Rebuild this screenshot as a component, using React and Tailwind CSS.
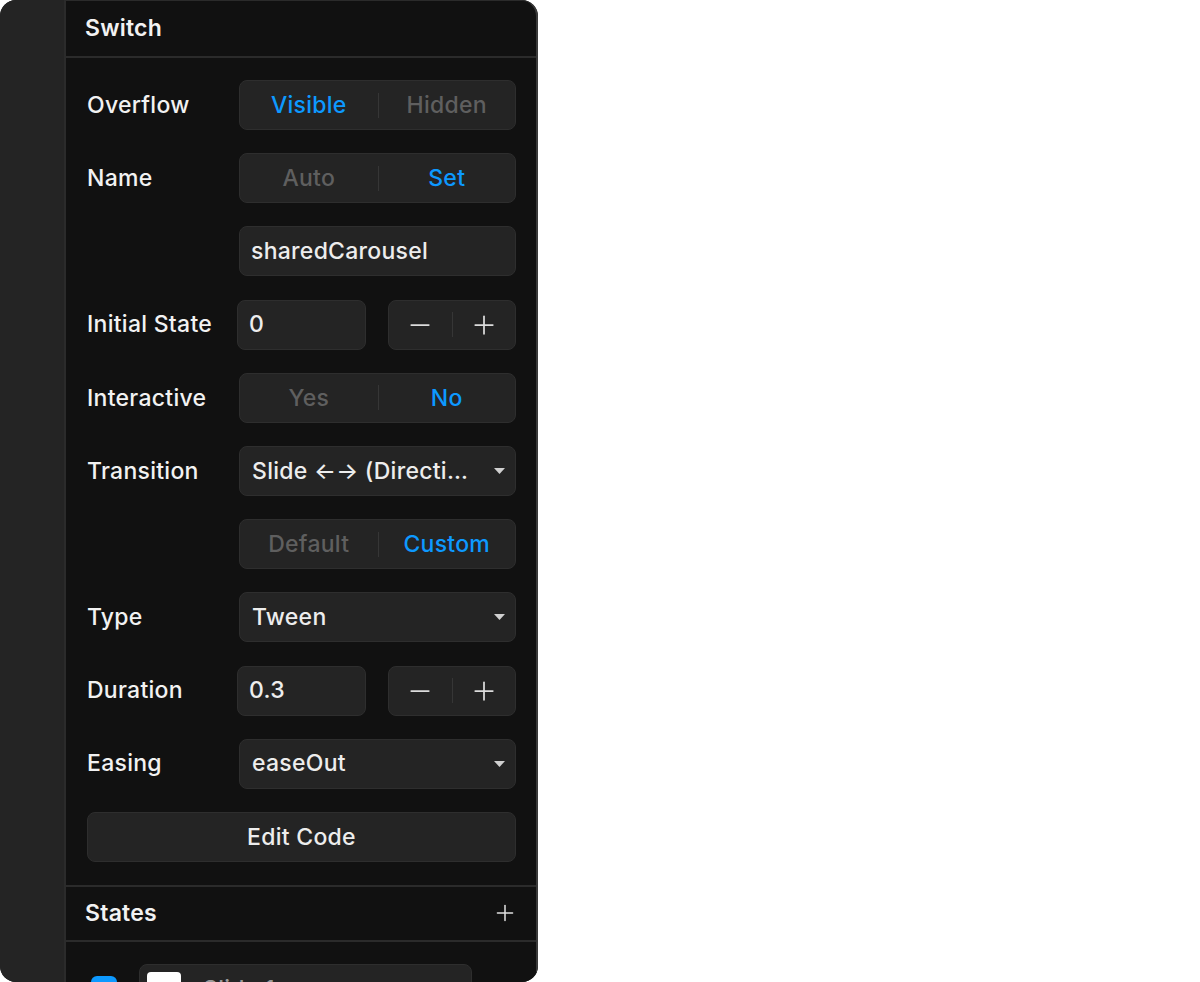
import { Minus, Plus } from 'lucide-react';

const text = 'text-[23px] font-medium tracking-[0.012em]';

const Label = ({ children }) => (
  <div className={`w-[150px] shrink-0 ${text} text-[#f2f2f2]`}>{children}</div>
);

const Segmented = ({ options, active }) => (
  <div className="ml-auto flex h-[50px] w-[277px] items-center rounded-[8px] border border-[#2e2e2e] bg-[#242424]">
    {options.map((o, i) => (
      <div key={o} className="flex flex-1 items-center">
        {i > 0 && <div className="h-[25px] w-px bg-[#363636]" />}
        <div className={`flex-1 text-center ${text} ${o === active ? 'text-[#0d99ff]' : 'text-[#5f5f5f]'}`}>
          {o}
        </div>
      </div>
    ))}
  </div>
);

const Input = ({ value, className = '' }) => (
  <div
    className={`flex h-[50px] items-center rounded-[8px] border border-[#2e2e2e] bg-[#242424] px-[11px] ${text} text-[#ededed] ${className}`}
  >
    {value}
  </div>
);

const Caret = () => (
  <svg width="11" height="6" viewBox="0 0 11 6" className="shrink-0">
    <path d="M0 0h11L5.5 6z" fill="#d0d0d0" />
  </svg>
);

const Select = ({ value }) => (
  <div className="ml-auto flex h-[50px] w-[277px] items-center gap-[17px] rounded-[8px] border border-[#2e2e2e] bg-[#242424] pl-[12px] pr-[10px]">
    <div className={`min-w-0 flex-1 truncate ${text} text-[#ededed]`}>{value}</div>
    <Caret />
  </div>
);

const Stepper = ({ value }) => (
  <div className="ml-auto flex w-[279px] gap-[22px]">
    <Input value={value} className="w-[129px]" />
    <div className="flex h-[50px] w-[128px] items-center rounded-[8px] border border-[#2e2e2e] bg-[#242424]">
      <div className="flex flex-1 justify-center">
        <Minus size={30} strokeWidth={1.4} color="#dcdcdc" />
      </div>
      <div className="h-[25px] w-px bg-[#363636]" />
      <div className="flex flex-1 justify-center">
        <Plus size={30} strokeWidth={1.4} color="#dcdcdc" />
      </div>
    </div>
  </div>
);

const Row = ({ label, children }) => (
  <div className="flex h-[50px] shrink-0 items-center">
    <Label>{label}</Label>
    {children}
  </div>
);

export default function App() {
  return (
    <div className="min-h-screen bg-white" style={{ fontFamily: 'Inter, "Noto Sans", sans-serif' }}>
      <div className="flex h-[982px] w-[538px] overflow-hidden rounded-[16px] bg-[#242424]">
        <div className="w-[64px] shrink-0 bg-[#242424]" />
        <div className="flex min-w-0 flex-1 flex-col rounded-tr-[16px] border-l-2 border-r-2 border-t border-[#2b2b2b] border-r-[#3a3a3a] bg-[#111111]">
          <div className="flex h-[57px] shrink-0 items-center border-b-2 border-[#2b2b2b] pl-[19px] text-[23px] font-semibold tracking-[0.01em] text-[#f2f2f2]">
            Switch
          </div>

          <div className="flex shrink-0 flex-col gap-[23.2px] pb-[23px] pl-[21px] pr-[20px] pt-[22px]">
            <Row label="Overflow">
              <Segmented options={['Visible', 'Hidden']} active="Visible" />
            </Row>
            <Row label="Name">
              <Segmented options={['Auto', 'Set']} active="Set" />
            </Row>
            <Row label="">
              <Input value="sharedCarousel" className="ml-auto w-[277px]" />
            </Row>
            <Row label="Initial State">
              <Stepper value="0" />
            </Row>
            <Row label="Interactive">
              <Segmented options={['Yes', 'No']} active="No" />
            </Row>
            <Row label="Transition">
              <Select value="Slide ←→ (Direction)" />
            </Row>
            <Row label="">
              <Segmented options={['Default', 'Custom']} active="Custom" />
            </Row>
            <Row label="Type">
              <Select value="Tween" />
            </Row>
            <Row label="Duration">
              <Stepper value="0.3" />
            </Row>
            <Row label="Easing">
              <Select value="easeOut" />
            </Row>
            <button
              className={`flex h-[50px] shrink-0 items-center justify-center rounded-[8px] border border-[#2e2e2e] bg-[#242424] ${text} text-[#ededed]`}
            >
              Edit Code
            </button>
          </div>

          <div className="flex h-[57px] shrink-0 items-center justify-between border-y-2 border-[#2b2b2b] pl-[19px] pr-[18px]">
            <span className="text-[23px] font-semibold tracking-[0.01em] text-[#f2f2f2]">States</span>
            <Plus size={26} strokeWidth={1.4} color="#e0e0e0" />
          </div>

          <div className="flex shrink-0 items-start gap-[22px] pl-[25px] pt-[22px]">
            <div className="mt-[12px] h-[26px] w-[26px] shrink-0 rounded-[6px] bg-[#0d99ff]" />
            <div className="flex h-[50px] w-[333px] items-center gap-[22px] rounded-[8px] border border-[#2e2e2e] bg-[#242424] px-[7px]">
              <div className="h-[34px] w-[34px] rounded-[4px] bg-white" />
              <span className={`${text} text-[#9a9a9a]`}>Slide 1</span>
            </div>
          </div>
        </div>
      </div>
    </div>
  );
}
